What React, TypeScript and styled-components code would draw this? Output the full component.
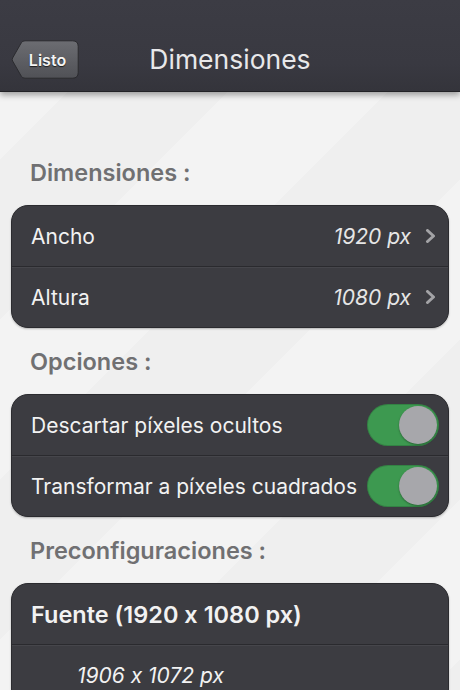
import React from "react"
import styled, { createGlobalStyle } from "styled-components"

const Global = createGlobalStyle`
  html, body {
    margin: 0;
    padding: 0;
    background: #efefef;
  }
  body {
    font-family: Inter, "Liberation Sans", Arial, sans-serif;
    font-feature-settings: "calt" 0;
    -webkit-font-smoothing: antialiased;
  }
`

const Screen = styled.div`
  width: 460px;
  height: 690px;
  overflow: hidden;
  background:
    linear-gradient(135deg, rgba(255,255,255,0.22) 25%, transparent 25%, transparent 50%, rgba(255,255,255,0.22) 50%, rgba(255,255,255,0.22) 75%, transparent 75%) 0 0 / 320px 320px,
    #efefef;
`

const NavBar = styled.header`
  height: 92px;
  box-sizing: border-box;
  padding: 0 11px 12px;
  display: grid;
  grid-template-columns: 1fr auto 1fr;
  align-items: end;
  background: linear-gradient(180deg, #3c3c44 0%, #393941 70%, #34343b 100%);
  border-bottom: 1px solid #222226;
  box-shadow: 0 3px 6px rgba(0, 0, 0, 0.35);
  position: relative;
  z-index: 1;
`

const BackButton = styled.button`
  position: relative;
  justify-self: start;
  width: 68px;
  height: 39px;
  padding: 0 0 0 5px;
  border: none;
  background: none;
  color: #f4f4f4;
  font-family: Inter, "Liberation Sans", Arial, sans-serif;
  font-weight: 600;
  font-size: 16px;
  text-shadow: 0 1px 1px rgba(0, 0, 0, 0.7);
  cursor: pointer;

  svg {
    position: absolute;
    inset: 0;
  }
  span {
    position: relative;
  }
`

const Title = styled.h1`
  margin: 0;
  height: 39px;
  line-height: 39px;
  font-size: 26.5px;
  font-weight: 400;
  color: #e8e8ea;
`

const Content = styled.main`
  padding: 68px 11px 0;
`

const SectionTitle = styled.h2`
  margin: 0 0 19px 19px;
  height: 26px;
  line-height: 26px;
  font-size: 23.5px;
  font-weight: 600;
  color: #707072;
`

const Card = styled.section`
  background: #3c3c41;
  border: 1px solid #2b2b2f;
  border-radius: 17px;
  box-shadow: 0 1px 2px rgba(0, 0, 0, 0.25);
  overflow: hidden;
  margin-bottom: 21px;
`

const Row = styled.div<{ $indent?: number }>`
  height: 60px;
  box-sizing: border-box;
  display: flex;
  align-items: center;
  padding: 0 9px 0 ${p => p.$indent ?? 19}px;
  & + & {
    height: 61px;
    border-top: 1px solid #2a2a2e;
    box-shadow: inset 0 1px 0 #46464b;
  }
`

const Label = styled.span<{ $bold?: boolean; $italic?: boolean }>`
  flex: 1;
  font-size: ${p => (p.$bold ? 23.5 : 21)}px;
  color: #f2f2f2;
  font-weight: ${p => (p.$bold ? 600 : 400)};
  font-style: ${p => (p.$italic ? "italic" : "normal")};
`

const Value = styled.span`
  font-size: 21px;
  font-style: italic;
  color: #e6e6e6;
  margin-right: 12px;
`

const Chevron = styled.svg`
  width: 14px;
  height: 14px;
  margin-right: 2px;
`

const Toggle = styled.div<{ $on: boolean }>`
  width: 72px;
  height: 42px;
  box-sizing: border-box;
  border-radius: 21px;
  padding: 2px;
  display: flex;
  justify-content: ${p => (p.$on ? "flex-end" : "flex-start")};
  background: ${p => (p.$on ? "#3d9950" : "#6a6a70")};
  box-shadow: inset 0 0 0 1px rgba(0, 0, 0, 0.15);
`

const Knob = styled.div`
  width: 38px;
  height: 38px;
  border-radius: 50%;
  background: #a7a7ab;
  box-shadow: 0 1px 2px rgba(0, 0, 0, 0.35);
`

const BackShape = () => (
  <svg width="68" height="39" viewBox="0 0 68 39">
    <defs>
      <linearGradient id="bk" x1="0" y1="0" x2="0" y2="1">
        <stop offset="0" stopColor="#6c6d72" />
        <stop offset="1" stopColor="#505156" />
      </linearGradient>
    </defs>
    <path
      d="M14 0.8 H61.5 Q67.2 0.8 67.2 6.5 V32.5 Q67.2 38.2 61.5 38.2 H14 Q11.5 38.2 10.3 36.2 L1.6 21 Q0.8 19.5 1.6 18 L10.3 2.8 Q11.5 0.8 14 0.8 Z"
      fill="url(#bk)"
      stroke="#2a2a2e"
      strokeWidth="1"
    />
  </svg>
)

const ChevronIcon = () => (
  <Chevron viewBox="0 0 14 14">
    <path d="M4.5 1.5 L10.5 7 L4.5 12.5" fill="none" stroke="#a3a3a6" strokeWidth="3" strokeLinecap="round" strokeLinejoin="round" />
  </Chevron>
)

export default function App() {
  return (
    <Screen>
      <Global />
      <NavBar>
        <BackButton>
          <BackShape />
          <span>Listo</span>
        </BackButton>
        <Title>Dimensiones</Title>
        <div />
      </NavBar>
      <Content>
        <SectionTitle>Dimensiones :</SectionTitle>
        <Card>
          <Row>
            <Label>Ancho</Label>
            <Value>1920 px</Value>
            <ChevronIcon />
          </Row>
          <Row>
            <Label>Altura</Label>
            <Value>1080 px</Value>
            <ChevronIcon />
          </Row>
        </Card>

        <SectionTitle>Opciones :</SectionTitle>
        <Card>
          <Row>
            <Label>Descartar píxeles ocultos</Label>
            <Toggle $on><Knob /></Toggle>
          </Row>
          <Row>
            <Label>Transformar a píxeles cuadrados</Label>
            <Toggle $on><Knob /></Toggle>
          </Row>
        </Card>

        <SectionTitle>Preconfiguraciones :</SectionTitle>
        <Card>
          <Row>
            <Label $bold>Fuente (1920 x 1080 px)</Label>
          </Row>
          <Row $indent={65}>
            <Label $italic>1906 x 1072 px</Label>
          </Row>
        </Card>
      </Content>
    </Screen>
  )
}
